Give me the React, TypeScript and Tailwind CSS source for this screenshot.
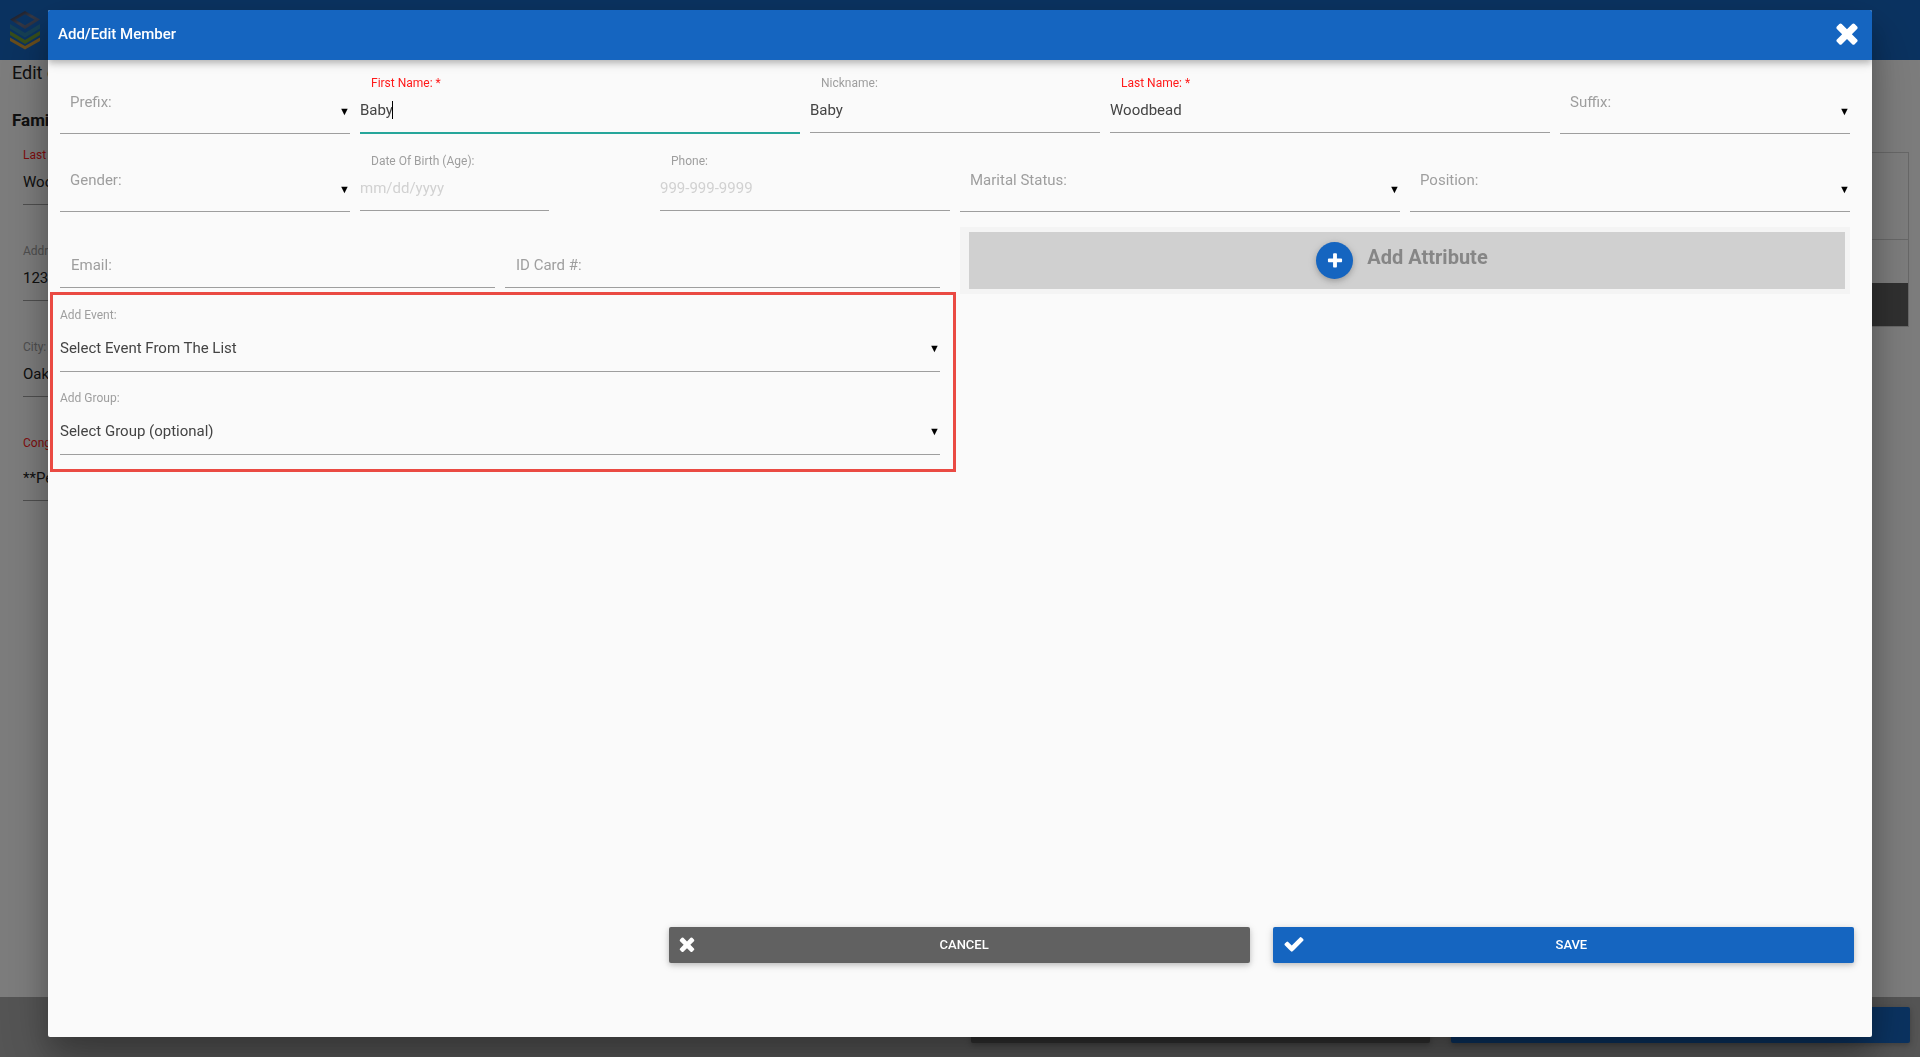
import React from 'react';
import clsx from 'clsx';

interface FieldProps {
  id: string;
  label: string;
  value?: string;
  placeholder?: string;
  className?: string;
  inputClassName?: string;
  required?: boolean;
  focused?: boolean;
}

interface SelectProps {
  id: string;
  label: string;
  className?: string;
}

const ICON_PATHS = {
  times:
    'M1490 1322q0 40-28 68l-136 136q-28 28-68 28t-68-28l-294-294-294 294q-28 28-68 28t-68-28l-136-136q-28-28-28-68t28-68l294-294-294-294q-28-28-28-68t28-68l136-136q28-28 68-28t68 28l294 294 294-294q28-28 68-28t68 28l136 136q28 28 28 68t-28 68l-294 294 294 294q28 28 28 68z',
  check:
    'M1671 566q0 40-28 68l-724 724-136 136q-28 28-68 28t-68-28l-136-136-362-362q-28-28-28-68t28-68l136-136q28-28 68-28t68 28l294 295 656-657q28-28 68-28t68 28l136 136q28 28 28 68z',
  plus: 'M1600 736v192q0 40-28 68t-68 28h-416v416q0 40-28 68t-68 28h-192q-40 0-68-28t-28-68v-416h-416q-40 0-68-28t-28-68v-192q0-40 28-68t68-28h416v-416q0-40 28-68t68-28h192q40 0 68 28t28 68v416h416q40 0 68 28t28 68z',
};

const PAGE_FIELDS = [
  { id: 'page-last', label: 'Last Name: *', value: 'Woodbead', required: true },
  { id: 'page-address', label: 'Address:', value: '123 Main Street' },
  { id: 'page-city', label: 'City:', value: 'Oakland' },
  {
    id: 'page-congregation',
    label: 'Congregation: *',
    value: '**Pending',
    required: true,
    inputClassName: 'h-[50px] pt-1',
  },
];

const BUTTON_SHADOW =
  'shadow-[0_2px_5px_0_rgba(0,0,0,0.16),0_2px_10px_0_rgba(0,0,0,0.12)]';

function Icon({
  name,
  className,
}: {
  name: keyof typeof ICON_PATHS;
  className: string;
}) {
  return (
    <svg
      viewBox="0 0 1792 1792"
      fill="currentColor"
      className={className}
      aria-hidden="true"
    >
      <path d={ICON_PATHS[name]} />
    </svg>
  );
}

function Logo() {
  return (
    <svg viewBox="0 0 32 40" className="w-8 h-10" aria-hidden="true">
      <defs>
        <linearGradient id="logo-top" x1="0" y1="0" x2="1" y2="1">
          <stop offset="0" stopColor="#1b2038" />
          <stop offset="0.5" stopColor="#6c6f86" />
          <stop offset="1" stopColor="#50597a" />
        </linearGradient>
      </defs>
      <path
        d="M1 9.500L16 1l15 8.500L16 19zM6.500 9.800L16 15.200l9.500-5.400L16 4.200z"
        fill="url(#logo-top)"
        fillRule="evenodd"
      />
      <path d="M1 14l15 9 15-9v4.500l-15 9-15-9z" fill="#2c7fa6" />
      <path d="M1 21l15 9 15-9v4l-15 9-15-9z" fill="#6f9c33" />
      <path d="M1 27.500l15 8.500 15-8.500v3.500l-15 8.500L1 31z" fill="#d09a38" />
    </svg>
  );
}

function TextField(props: FieldProps) {
  const {
    id,
    label,
    value,
    placeholder,
    className,
    inputClassName,
    required,
    focused,
  } = props;

  return (
    <div className={clsx('relative pt-[15px]', className)}>
      <label
        htmlFor={id}
        className={clsx(
          'block pl-[11px] text-xs leading-4',
          required ? 'text-[#ff1a1a]' : 'text-[#9e9e9e]',
        )}
      >
        {label}
      </label>
      <input
        id={id}
        type="text"
        defaultValue={value}
        placeholder={placeholder}
        className={clsx(
          'block h-[42px] border-b bg-transparent pb-1 text-[15px] text-[#444] outline-none placeholder:text-[#d1d1d1]',
          focused
            ? 'border-[#26a69a] shadow-[0_1px_0_0_#26a69a]'
            : 'border-[#9e9e9e]',
          inputClassName || 'w-full',
        )}
      />
      {focused && (
        <span className="absolute left-8 top-[41px] h-[18px] w-px bg-black" />
      )}
    </div>
  );
}

// Empty select, its label rests over the control
function SelectField({ id, label, className }: SelectProps) {
  return (
    <div className={clsx('relative pt-[15px]', className)}>
      <label
        htmlFor={id}
        className="absolute left-2.5 top-8 text-[15px] leading-5 text-[#9e9e9e]"
      >
        {label}
      </label>
      <select
        id={id}
        className="block h-[59px] w-full appearance-none border-b border-[#9e9e9e] bg-transparent text-[15px] outline-none"
      >
        <option value=""></option>
      </select>
      <Arrow className="top-[46px] right-0" />
    </div>
  );
}

function Arrow({ className }: { className: string }) {
  return (
    <span
      className={clsx(
        'absolute pointer-events-none text-[11px] leading-3 text-black',
        className,
      )}
    >
      ▼
    </span>
  );
}

function RestingField({ id, label }: SelectProps) {
  return (
    <div className="relative flex-1">
      <label
        htmlFor={id}
        className="absolute left-[11px] top-3 text-[15px] leading-5 text-[#9e9e9e]"
      >
        {label}
      </label>
      <input
        id={id}
        type="text"
        className="block h-[45px] w-full border-b border-[#9e9e9e] bg-transparent text-[15px] outline-none"
      />
    </div>
  );
}

function ListSelect({
  id,
  label,
  option,
}: {
  id: string;
  label: string;
  option: string;
}) {
  return (
    <div className="relative">
      <label htmlFor={id} className="block text-xs leading-4 text-[#9e9e9e]">
        {label}
      </label>
      <select
        id={id}
        className="block h-[49px] w-full appearance-none border-b border-[#9e9e9e] bg-transparent pt-0.5 text-[15px] text-[#444] outline-none"
      >
        <option>{option}</option>
      </select>
      <Arrow className="top-9 right-0" />
    </div>
  );
}

function Page() {
  return (
    <div className="flex min-h-screen flex-col bg-[#fafafa]" aria-hidden="true">
      <header className="flex h-[60px] items-center bg-[#1565c0] px-[9px]">
        <Logo />
      </header>
      <main className="flex flex-1 justify-between">
        <div className="w-80 pl-3">
          <h1 className="text-lg leading-[26px] text-[#212121]">
            Edit or View Family
          </h1>
          <h2 className="mt-5 text-[17px] leading-7 font-bold text-[#212121]">
            Family Information
          </h2>
          <div className="mt-[13px] flex flex-col gap-[38px] pl-[11px]">
            {PAGE_FIELDS.map(({ id, label, value, required, inputClassName }) => (
              <div key={id}>
                <label
                  htmlFor={id}
                  className={clsx(
                    'block text-xs leading-4',
                    required ? 'text-[#ff1a1a]' : 'text-[#9e9e9e]',
                  )}
                >
                  {label}
                </label>
                <input
                  id={id}
                  tabIndex={-1}
                  defaultValue={value}
                  className={clsx(
                    'block w-full border-b border-[#9e9e9e] text-[15px] text-[#212121]',
                    inputClassName || 'h-[42px] pb-[3px]',
                  )}
                />
              </div>
            ))}
          </div>
        </div>
        <div className="mt-[92px] mr-[11px] flex h-[175px] w-80 flex-col border border-[#d0d0d0]">
          <div className="h-[87px] border-b border-[#d0d0d0]"></div>
          <div className="flex-1"></div>
          <div className="h-[43px] bg-[#616161]"></div>
        </div>
      </main>
      <footer className="flex h-[60px] justify-end gap-[21px] bg-[#aaaaaa] pt-2.5 pr-2.5">
        <div
          className={clsx('h-9 w-[459px] rounded-xs bg-[#616161]', BUTTON_SHADOW)}
        ></div>
        <div
          className={clsx('h-9 w-[459px] rounded-xs bg-[#1565c0]', BUTTON_SHADOW)}
        ></div>
      </footer>
    </div>
  );
}

function MemberForm() {
  return (
    <form className="flex flex-1 flex-col px-3 pr-[22px]">
      <div className="grid grid-cols-12 gap-x-2.5 pb-1">
        <SelectField id="prefix" label="Prefix:" className="col-span-2" />
        <TextField
          id="first-name"
          label="First Name: *"
          value="Baby"
          className="col-span-3"
          required
          focused
        />
        <TextField
          id="nickname"
          label="Nickname:"
          value="Baby"
          className="col-span-2"
        />
        <TextField
          id="last-name"
          label="Last Name: *"
          value="Woodbead"
          className="col-span-3"
          required
        />
        <SelectField id="suffix" label="Suffix:" className="col-span-2" />
      </div>
      <div className="grid grid-cols-12 gap-x-2.5">
        <SelectField id="gender" label="Gender:" className="col-span-2" />
        <TextField
          id="birth"
          label="Date Of Birth (Age):"
          placeholder="mm/dd/yyyy"
          className="col-span-2"
          inputClassName="w-[65%]"
        />
        <TextField
          id="phone"
          label="Phone:"
          placeholder="999-999-9999"
          className="col-span-2"
        />
        <SelectField
          id="marital"
          label="Marital Status:"
          className="col-span-3"
        />
        <SelectField id="position" label="Position:" className="col-span-3" />
      </div>
      <div className="grid grid-cols-2 items-start gap-x-2.5">
        <div className="pt-[31px] pr-2.5">
          <div className="flex gap-2.5">
            <RestingField id="email" label="Email:" />
            <RestingField id="id-card" label="ID Card #:" />
          </div>
          <div className="mt-1 -mr-4 -ml-2.5 flex flex-col gap-[18px] border-3 border-[#ea4a43] pt-3 pr-[13px] pb-3.5 pl-[7px]">
            <ListSelect
              id="event"
              label="Add Event:"
              option="Select Event From The List"
            />
            <ListSelect
              id="group"
              label="Add Group:"
              option="Select Group (optional)"
            />
          </div>
        </div>
        <div className="mt-[15px] bg-[#f4f4f4] py-[5px] pr-[5px] pl-[9px]">
          <button
            type="button"
            className="flex h-[57px] w-full items-center justify-center gap-3.5 bg-[#d0d0d0] pr-2.5 text-[#868686]"
          >
            <span
              className={clsx(
                'flex size-[37px] items-center justify-center rounded-full bg-[#1565c0] text-white',
                BUTTON_SHADOW,
              )}
            >
              <Icon name="plus" className="size-[18px]" />
            </span>
            <span className="pb-2 text-xl leading-6 font-bold">
              Add Attribute
            </span>
          </button>
        </div>
      </div>
      <div className="mt-auto mr-[-4px] mb-[74px] flex justify-end gap-[23px]">
        <button
          type="button"
          className={clsx(
            'relative h-9 w-[32.4%] rounded-xs bg-[#616161] pr-2 pl-[18px] text-[13px] font-medium text-white uppercase',
            BUTTON_SHADOW,
          )}
        >
          <Icon name="times" className="absolute top-1.5 left-[7px] size-[22px]" />
          Cancel
        </button>
        <button
          type="submit"
          className={clsx(
            'relative h-9 w-[32.4%] rounded-xs bg-[#1565c0] pr-2 pl-6 text-[13px] font-medium text-white uppercase',
            BUTTON_SHADOW,
          )}
        >
          <Icon name="check" className="absolute top-1.5 left-2.5 size-[22px]" />
          Save
        </button>
      </div>
    </form>
  );
}

function App() {
  return (
    <div className="relative overflow-hidden font-[Roboto,sans-serif]">
      <Page />
      <div className="fixed inset-0 flex justify-center bg-black/50 pt-2.5 pb-5">
        <div
          role="dialog"
          aria-labelledby="dialog-title"
          className="flex w-[95%] flex-col overflow-hidden rounded-xs bg-[#fafafa] shadow-[0_16px_28px_0_rgba(0,0,0,0.22),0_25px_55px_0_rgba(0,0,0,0.21)]"
        >
          <header className="flex h-[50px] shrink-0 items-center justify-between bg-[#1565c0] pr-[9px] pb-0.5 pl-2.5 text-white shadow-[0_3px_6px_0_rgba(0,0,0,0.18),0_3px_11px_0_rgba(0,0,0,0.14)]">
            <h2 id="dialog-title" className="text-[15px] font-medium">
              Add/Edit Member
            </h2>
            <button type="button" aria-label="Close" className="mb-[3px]">
              <Icon name="times" className="size-8" />
            </button>
          </header>
          <MemberForm />
        </div>
      </div>
    </div>
  );
}

export default App;
